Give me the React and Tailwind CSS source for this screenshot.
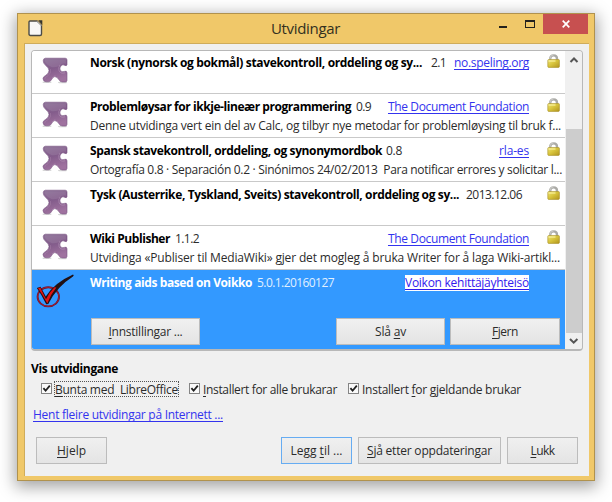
import { useLayoutEffect, useRef, useState } from 'react';

// Spreads a text run over an exact width by adjusting its letter spacing.
function Fit({ w, className = '', children }) {
  const ref = useRef(null);
  const [spacing, setSpacing] = useState(0);
  useLayoutEffect(() => {
    const el = ref.current;
    setSpacing((w - el.getBoundingClientRect().width) / el.textContent.length);
  }, [w]);
  return (
    <span
      ref={ref}
      className={`inline-block shrink-0 whitespace-pre ${className}`}
      style={{ letterSpacing: `${spacing}px` }}
    >
      {children}
    </span>
  );
}

function Mnemonic({ children }) {
  return <span className="underline decoration-1 underline-offset-2 [text-decoration-skip-ink:none]">{children}</span>;
}

function Puzzle() {
  return (
    <svg viewBox="0 0 28 28" className="h-7 w-7">
      <defs>
        <linearGradient id="puzzle" x1="0" y1="0" x2="0.3" y2="1">
          <stop offset="0" stopColor="#8b7096" />
          <stop offset="0.5" stopColor="#835c8b" />
          <stop offset="1" stopColor="#9f729f" />
        </linearGradient>
      </defs>
      <ellipse cx="6" cy="26.2" rx="4.5" ry="0.9" fill="#d6d6d6" />
      <ellipse cx="21.5" cy="26.4" rx="4.5" ry="0.9" fill="#d6d6d6" />
      <path
        d="M4.4 2.2H24.2Q26 2.2 26 4V9Q25.4 10.2 24 9.4Q21.8 8 20 9.8Q18.2 12 19.2 14.2Q20.8 16.6 23.4 15.4Q25.8 14.4 26 16.8V24.4Q25.8 26 24.2 26H21.4Q19.2 26 18 23.8Q16 20.6 13.8 20.6Q11.8 21 10.8 23.2Q9.8 25.6 7.4 25.8H5Q2.2 25.6 2 22.6Q2 20.8 4.6 19.4Q8 17.4 8 14.4Q7.8 11.8 4.8 9.6Q2.2 7.4 2.2 4.8Q2.4 2.2 4.4 2.2Z"
        fill="url(#puzzle)"
        stroke="#7b5583"
        strokeWidth="0.6"
      />
      <path d="M4 3.2H24.8V7.8Q20.5 6.8 18.2 10Q14 12 10.5 11Q5 8.5 3.5 5Z" fill="#b8a4be" opacity="0.2" />
      <path d="M19 8.8Q17 11.5 18.1 15Q20 18 24 16.8" fill="none" stroke="#c5a9c8" strokeWidth="0.8" opacity="0.5" />
      <path d="M9.5 13Q10.5 17 7.4 19.4Q4 21 3.6 23M11.3 22.5Q12.4 19.6 14.4 19.6" fill="none" stroke="#b993bb" strokeWidth="0.8" opacity="0.4" />
    </svg>
  );
}

function Lock() {
  return (
    <svg viewBox="0 0 13 14" className="h-3.5 w-[13px]">
      <defs>
        <linearGradient id="brass" x1="0" y1="0" x2="1" y2="1">
          <stop offset="0" stopColor="#eee476" />
          <stop offset="0.45" stopColor="#d9c63e" />
          <stop offset="1" stopColor="#b2951d" />
        </linearGradient>
      </defs>
      <path d="M3.2 7V4.8Q3.2 1.4 6.6 1.4T10 4.8V7" fill="none" stroke="#aaaaa6" strokeWidth="2.4" />
      <path d="M3 5V4.3Q3.4 1 6.5 1" fill="none" stroke="#d3d3d0" strokeWidth="0.8" />
      <rect x="0.8" y="5.6" width="11.6" height="7.8" rx="0.8" fill="url(#brass)" stroke="#a48b21" strokeWidth="0.6" />
      <path d="M1.5 7H8.5" stroke="#fff7a9" strokeWidth="1" />
    </svg>
  );
}

function Voikko() {
  return (
    <svg viewBox="0 0 40 36" className="h-9 w-10">
      <ellipse cx="13.3" cy="23.8" rx="10.7" ry="9.6" fill="none" stroke="#611c35" strokeWidth="1.9" />
      <ellipse cx="13.3" cy="23.8" rx="10.7" ry="9.6" fill="none" stroke="#b01830" strokeWidth="0.9" />
      <path d="M1.8 15L5.5 13.8L10.8 23.5Q19 10 38 1.5Q39.5 1.8 38 3.5Q22 13.5 13.3 30.9L11.2 31.3Q6.5 21.5 1.8 15Z" fill="#211014" />
      <path d="M3 15.3L5.3 14.6L11 26.3Q14.5 19 19.5 14.3L21.4 14.5Q15.6 21.5 12.3 30.4Q7.5 21.5 3 15.3Z" fill="#e01212" />
    </svg>
  );
}

const rows = [
  { name: 'Norsk (nynorsk og bokmål) stavekontroll, orddeling og sy...', nw: 332, ver: '2.1', vw: 15, gap: 'ml-[9px]', link: 'no.speling.org', lw: 75 },
  { name: 'Problemløysar for ikkje-lineær programmering', nw: 261, ver: '0.9', vw: 15, gap: 'ml-[5px]', link: 'The Document Foundation', lw: 141, desc: 'Denne utvidinga vert ein del av Calc, og tilbyr nye metodar for problemløysing til bruk f...', dw: 471 },
  { name: 'Spansk stavekontroll, orddeling, og synonymordbok', nw: 292, ver: '0.8', vw: 16, gap: 'ml-1', link: 'rla-es', lw: 30, desc: 'Ortografía 0.8 · Separación 0.2 · Sinónimos 24/02/2013  Para notificar errores y solicitar l...', dw: 472 },
  { name: 'Tysk (Austerrike, Tyskland, Sveits) stavekontroll, orddeling og sy...', nw: 369, ver: '2013.12.06', vw: 56, gap: 'ml-[7px]' },
  { name: 'Wiki Publisher', nw: 80, ver: '1.1.2', vw: 24, gap: 'ml-[5px]', link: 'The Document Foundation', lw: 141, desc: 'Utvidinga «Publiser til MediaWiki» gjer det mogleg å bruka Writer for å laga Wiki-artikl...', dw: 470 },
];

function Row({ row }) {
  return (
    <div className="flex h-11 shrink-0 border-b border-[#c9c9c9] bg-white pl-[9px] pt-[6px]">
      <div className="w-[49px] shrink-0"><Puzzle /></div>
      <div className="-mt-px w-[439px] shrink-0">
        <div className="flex h-4">
          <Fit w={row.nw} className="font-bold text-black">{row.name}</Fit>
          <Fit w={row.vw} className={row.gap}>{row.ver}</Fit>
          {row.link && (
            <Fit w={row.lw} className="ml-auto text-[#3333ee] underline underline-offset-2 [text-decoration-skip-ink:none]">{row.link}</Fit>
          )}
        </div>
        {row.desc && <div className="mt-[3px] h-4"><Fit w={row.dw}>{row.desc}</Fit></div>}
      </div>
      <div className="-mt-[2px] ml-[18px] shrink-0"><Lock /></div>
    </div>
  );
}

function Button({ className, border = 'border-[#bcbcbc]', w, children }) {
  return (
    <div className={`flex h-[27px] shrink-0 items-center justify-center border bg-gradient-to-b from-[#f0f0f0] to-[#e4e4e4] ${border} ${className}`}>
      <Fit w={w}>{children}</Fit>
    </div>
  );
}

function Check() {
  return (
    <svg viewBox="0 0 11 11" className="mt-[2px] h-[11px] w-[11px] shrink-0">
      <rect x="0.5" y="0.5" width="10" height="10" fill="#fafafa" stroke="#858585" />
      <path d="M2.4 5.2L4.6 7.7L8.8 2.6" fill="none" stroke="#202020" strokeWidth="1.8" />
    </svg>
  );
}

function TitleBar() {
  return (
    <div className="flex h-[29px] shrink-0 text-[#33301f]">
      <svg viewBox="0 0 15 17" className="ml-[10px] mt-[6px] h-[17px] w-[15px]">
        <path d="M2 1H9L13.5 5.5V14Q13.5 15.5 12 15.5H2.5Q1 15.5 1 14V2.3Q1 1 2 1Z" fill="#f8f8f6" stroke="#4b4b47" strokeWidth="1.4" />
        <path d="M10.2 0.3H14.3V5.2Z" fill="#34342f" />
        <path d="M9.2 1.4L13.2 5.7" stroke="#f8f8f6" strokeWidth="0.8" />
      </svg>
      <div className="ml-[228px] mt-[3px] text-[15px] leading-[22px]"><Fit w={69}>Utvidingar</Fit></div>
      <div className="ml-auto mt-3 h-[2px] w-2 bg-[#24221c]" />
      <div className="ml-[18px] mt-[6px] h-2 w-[10px] border border-t-2 border-[#24221c]" />
      <div className="ml-2 flex h-5 w-[45px] items-center justify-center bg-[#c75050]">
        <svg viewBox="0 0 8 8" className="h-2 w-2"><path d="M0.7 0.7L7.3 7.3M7.3 0.7L0.7 7.3" stroke="#fff" strokeWidth="1.7" /></svg>
      </div>
      <div className="w-[6px]" />
    </div>
  );
}

export default function App() {
  return (
    <div className="h-[502px] w-[612px] overflow-hidden bg-white pl-[17px] pt-[13px] font-['Open_Sans','Noto_Sans',sans-serif] text-[12px] leading-4 text-[#2b2b2b]">
      <div className="flex h-[468px] w-[578px] flex-col border border-[#b0924e] bg-[#f0c869] shadow-[0_4px_15px_2px_rgba(0,0,0,0.36)]">
        <TitleBar />
        <div className="ml-[6px] mr-[5px] flex h-[433px] flex-col border-l border-t border-[#cfac5b] bg-[#f0f0f0] pl-[6px] pt-[6px]">
          <div className="flex h-[301px] w-[552px] overflow-hidden rounded-sm border border-b-2 border-[#b8b8b8]">
            <div className="-mt-px flex w-[533px] flex-col overflow-hidden bg-white">
              {rows.map((row) => <Row key={row.name} row={row} />)}
              <div className="flex h-20 shrink-0 flex-col bg-[#3399ff] text-white">
                <div className="flex h-12 pl-[3px] pt-[3px]">
                  <div className="w-[55px] shrink-0"><Voikko /></div>
                  <div className="mt-[2px] flex h-4 w-[439px] shrink-0">
                    <Fit w={162} className="font-bold">Writing aids based on Voikko</Fit>
                    <Fit w={77} className="ml-[5px] text-[#e0f0ff]">5.0.1.20160127</Fit>
                    <Fit w={124} className="ml-auto bg-white text-[#3319ee] underline underline-offset-2 [text-decoration-skip-ink:none]">Voikon kehittäjäyhteisö</Fit>
                  </div>
                </div>
                <div className="flex pl-[59px] text-[#2b2b2b]">
                  <Button className="w-[109px]" w={74}><Mnemonic>I</Mnemonic>nnstillingar ...</Button>
                  <Button className="ml-[136px] w-[109px]" w={31}>Slå <Mnemonic>a</Mnemonic>v</Button>
                  <Button className="ml-[5px] w-[110px]" w={26}><Mnemonic>F</Mnemonic>jern</Button>
                </div>
              </div>
            </div>
            <div className="ml-px flex w-4 flex-col bg-[#f0f0f0]">
              <svg viewBox="0 0 16 18" className="h-[18px] w-4"><path d="M4.5 11L8 7.5L11.5 11" fill="none" stroke="#555" strokeWidth="2" /></svg>
              <div className="mt-[60px] h-[204px] bg-[#cdcdcd]" />
              <svg viewBox="0 0 16 16" className="h-4 w-4"><path d="M4 6L7.7 9.7L11.4 6" fill="none" stroke="#555" strokeWidth="2" /></svg>
            </div>
          </div>
          <div className="mt-[10px] h-4"><Fit w={87} className="font-bold text-black">Vis utvidingane</Fit></div>
          <div className="mt-[4px] flex h-4 pl-[10px]">
            <Check />
            <div className="ml-[2px] h-4 w-[125px] border border-dotted border-[#555]"><Fit w={123}><Mnemonic>B</Mnemonic>unta med  LibreOffice</Fit></div>
            <div className="w-[10px]" />
            <Check />
            <Fit w={134} className="ml-[3px] mt-px"><Mnemonic>I</Mnemonic>nstallert for alle brukarar</Fit>
            <div className="w-[11px]" />
            <Check />
            <Fit w={159} className="ml-[3px] mt-px">Installert <Mnemonic>f</Mnemonic>or gjeldande brukar</Fit>
          </div>
          <div className="mt-[10px] h-4 pl-[2px]"><Fit w={190} className="text-[#3333ee] underline underline-offset-2 [text-decoration-skip-ink:none]">Hent fleire utvidingar på Internett ...</Fit></div>
          <div className="mt-[14px] flex pl-[5px]">
            <Button className="w-[71px]" w={29}><Mnemonic>H</Mnemonic>jelp</Button>
            <Button className="ml-[174px] w-[71px]" border="border-[#66acf2]" w={52}>Legg <Mnemonic>t</Mnemonic>il ...</Button>
            <Button className="ml-[6px] w-[143px]" w={125}><Mnemonic>S</Mnemonic>jå etter oppdateringar</Button>
            <Button className="ml-[6px] w-[71px]" w={24}><Mnemonic>L</Mnemonic>ukk</Button>
          </div>
        </div>
      </div>
    </div>
  );
}
